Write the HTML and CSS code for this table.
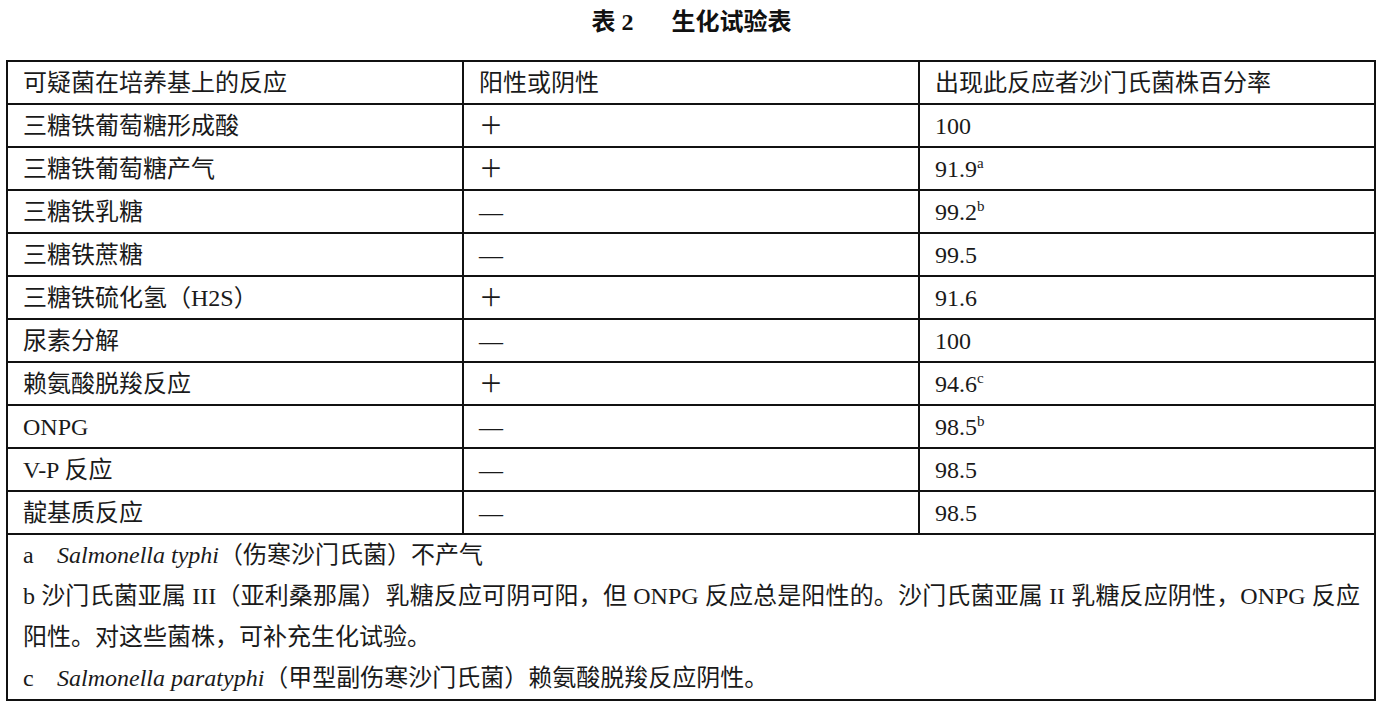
FILE: index.html
```html
<!DOCTYPE html>
<html lang="zh-CN">
<head>
<meta charset="utf-8">
<title>表2 生化试验表</title>
<link rel="stylesheet" href="styles.css">
</head>
<body>
<div class="page">
  <h1 class="title"><span>表 2</span><span class="title-gap">生化试验表</span></h1>
  <table class="bio">
    <colgroup><col><col><col></colgroup>
    <tbody>
      <tr><td>可疑菌在培养基上的反应</td><td>阳性或阴性</td><td>出现此反应者沙门氏菌株百分率</td></tr>
      <tr><td>三糖铁葡萄糖形成酸</td><td>＋</td><td>100</td></tr>
      <tr><td>三糖铁葡萄糖产气</td><td>＋</td><td>91.9<sup>a</sup></td></tr>
      <tr><td>三糖铁乳糖</td><td>—</td><td>99.2<sup>b</sup></td></tr>
      <tr><td>三糖铁蔗糖</td><td>—</td><td>99.5</td></tr>
      <tr><td>三糖铁硫化氢（H2S）</td><td>＋</td><td>91.6</td></tr>
      <tr><td>尿素分解</td><td>—</td><td>100</td></tr>
      <tr><td>赖氨酸脱羧反应</td><td>＋</td><td>94.6<sup>c</sup></td></tr>
      <tr><td>ONPG</td><td>—</td><td>98.5<sup>b</sup></td></tr>
      <tr><td>V-P 反应</td><td>—</td><td>98.5</td></tr>
      <tr><td>靛基质反应</td><td>—</td><td>98.5</td></tr>
      <tr class="notes-row">
        <td colspan="3" class="notes">
          <div class="note"><span class="mark">a</span><i>Salmonella typhi</i>（伤寒沙门氏菌）不产气</div>
          <div class="note justify">b 沙门氏菌亚属 III（亚利桑那属）乳糖反应可阴可阳，但 ONPG 反应总是阳性的。沙门氏菌亚属 II 乳糖反应阴性，ONPG 反应</div>
          <div class="note">阳性。对这些菌株，可补充生化试验。</div>
          <div class="note"><span class="mark">c</span><i>Salmonella paratyphi</i>（甲型副伤寒沙门氏菌）赖氨酸脱羧反应阴性。</div>
        </td>
      </tr>
    </tbody>
  </table>
</div>
</body>
</html>
```

FILE: styles.css
```css
html, body {
  margin: 0;
  padding: 0;
  background: #ffffff;
}

body {
  font-family: "Liberation Serif", "Noto Sans CJK SC", serif;
  color: #1a1a1a;
}

.page {
  padding: 0 6px;
}

.title {
  margin: 0;
  height: 60px;
  line-height: 44px;
  font-size: 24px;
  font-weight: bold;
  text-align: center;
  color: #111;
}

.title-gap {
  margin-left: 38px;
}

.bio {
  width: 1370px;
  table-layout: fixed;
  border-collapse: collapse;
  font-size: 24px;
}

.bio td {
  border: 2px solid #111;
  height: 41px;
  padding: 0 15px;
  vertical-align: middle;
  line-height: 30px;
  white-space: nowrap;
}

.bio sup {
  font-size: 15px;
  line-height: 0;
  vertical-align: 9px;
}

.bio td.notes {
  padding: 0 14px 0 15px;
  height: auto;
  white-space: normal;
}

.note {
  height: 41px;
  line-height: 41px;
  white-space: nowrap;
}

.note.justify {
  white-space: normal;
  text-align: justify;
  text-align-last: justify;
  overflow: hidden;
}

.mark {
  display: inline-block;
  width: 34px;
}

.note i {
  font-style: italic;
}
```
